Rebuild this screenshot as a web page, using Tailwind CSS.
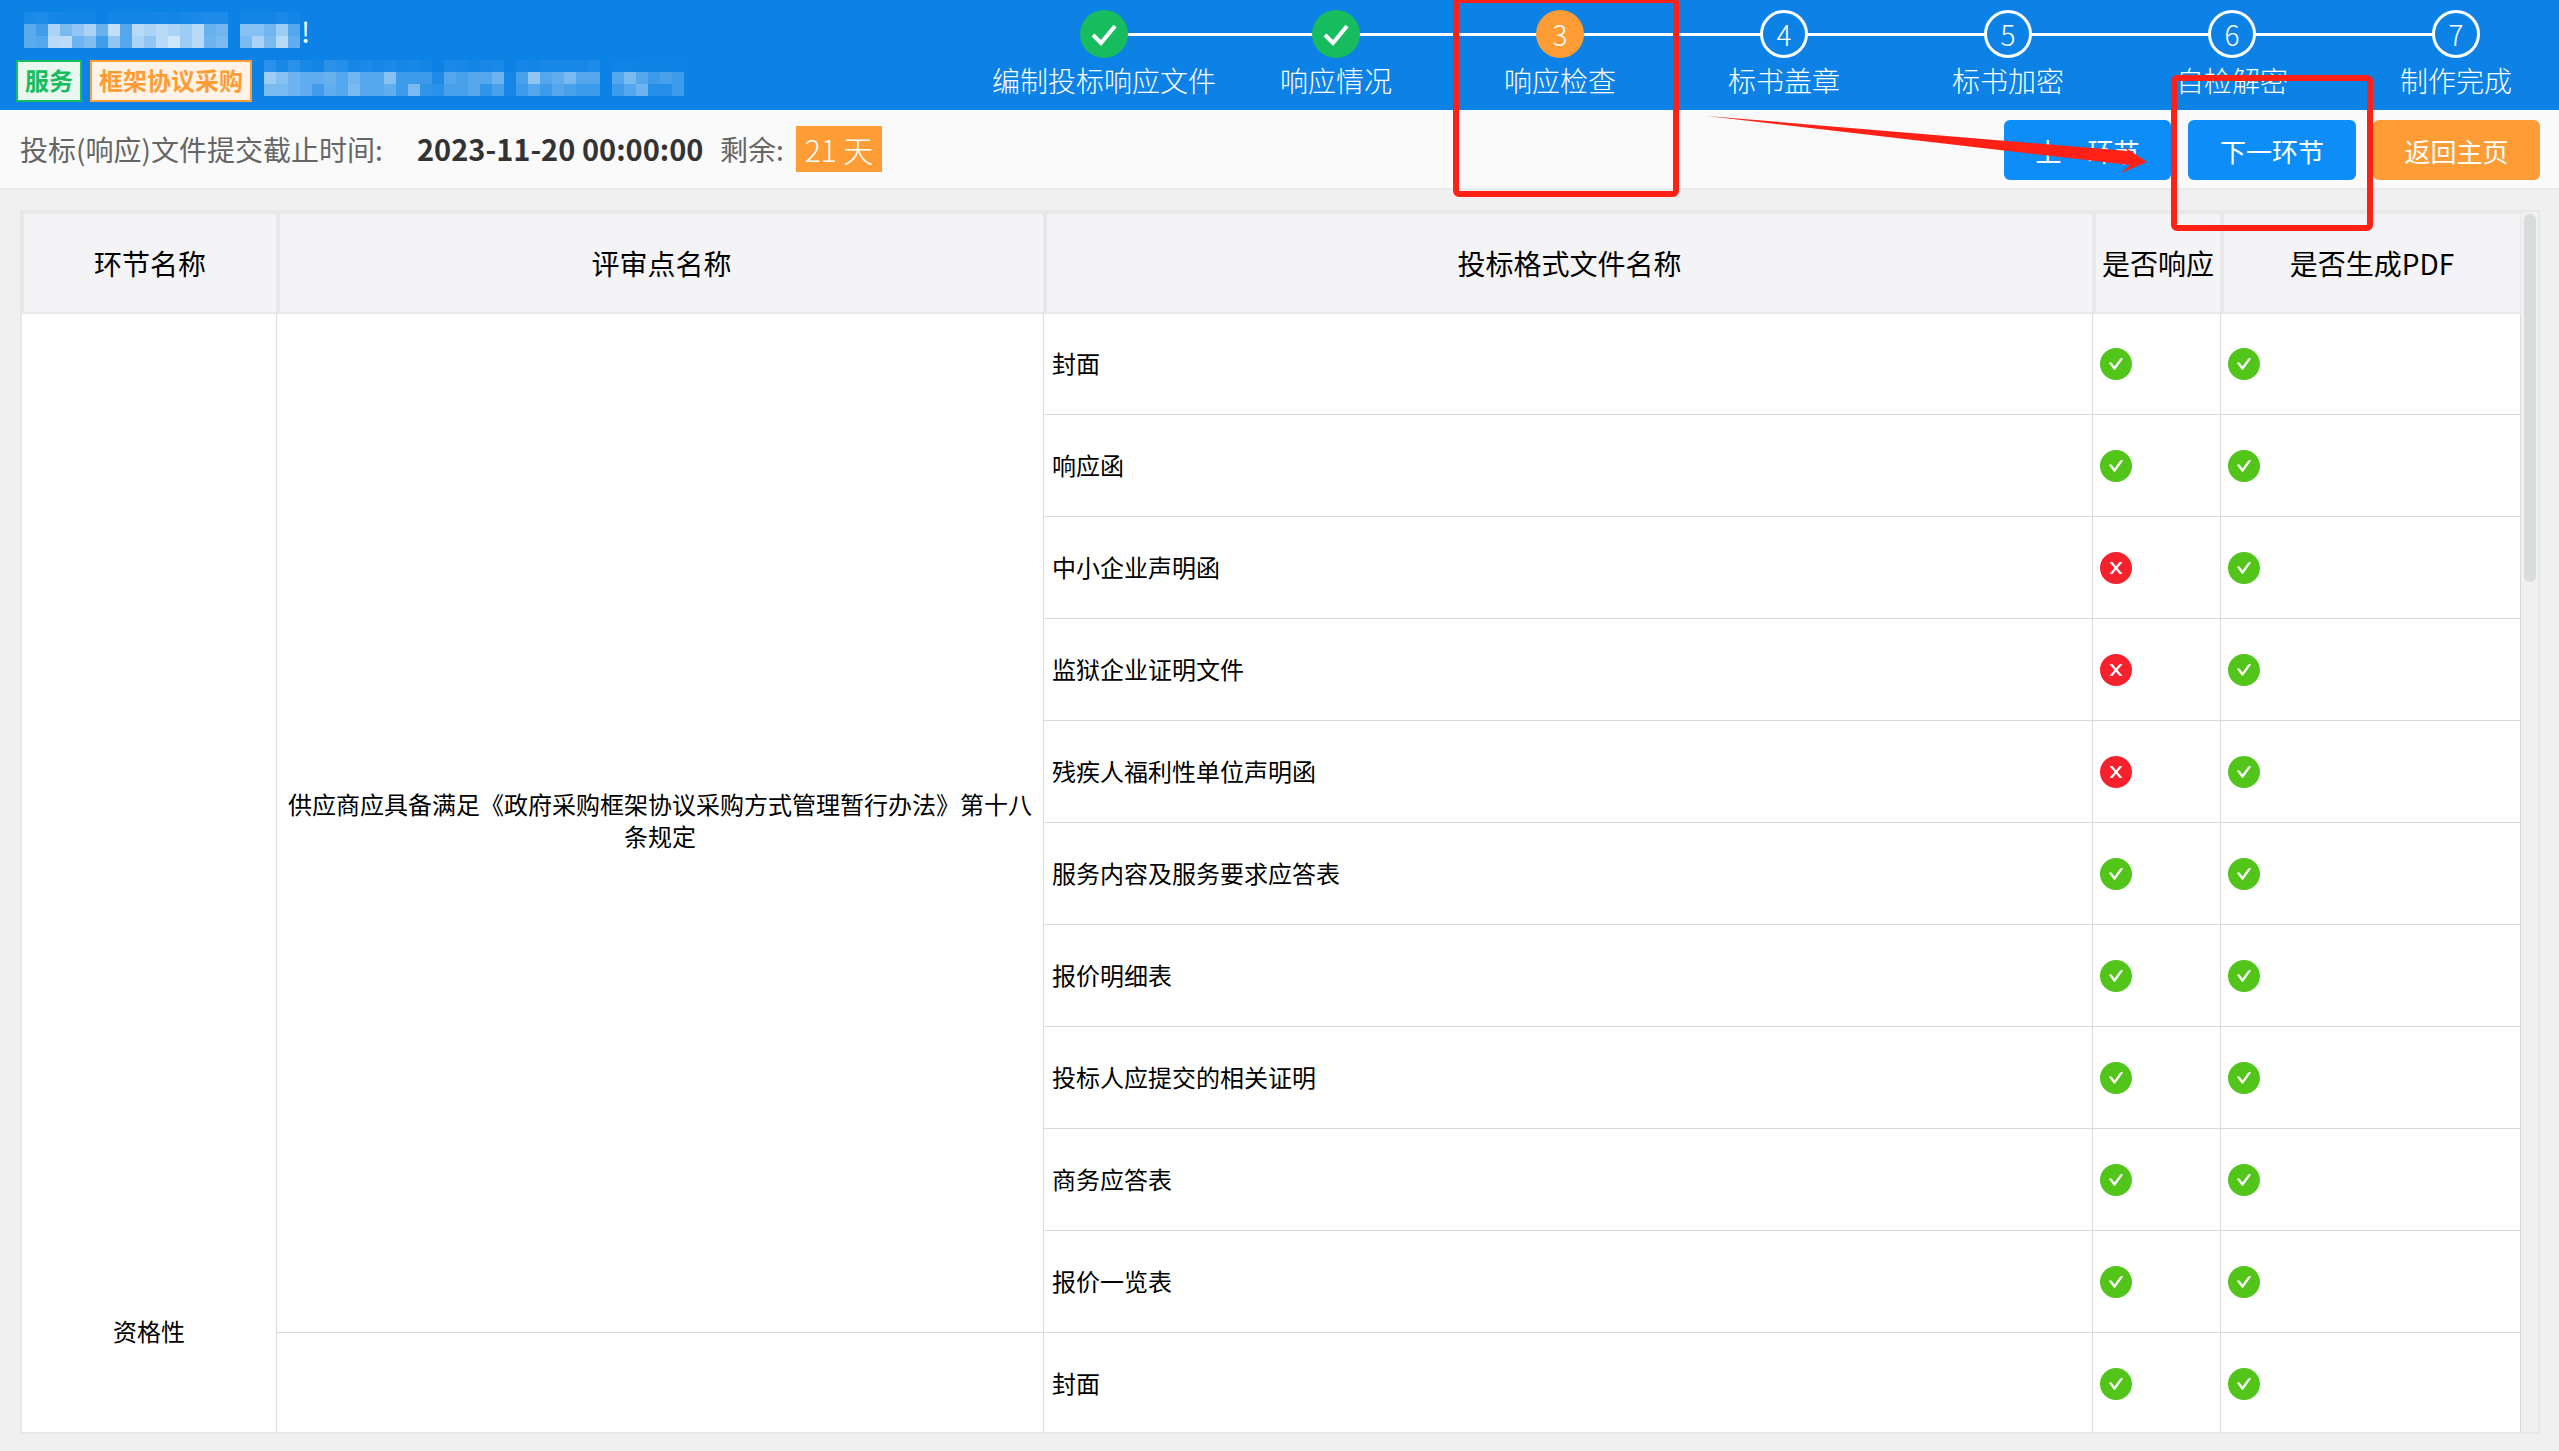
<!DOCTYPE html>
<html lang="zh-CN">
<head>
    <meta charset="UTF-8">
    <title>响应检查</title>
    <script src="https://cdn.jsdelivr.net/npm/@tailwindcss/browser@4"></script>
</head>
<body class="bg-[#f0f0f0] h-screen overflow-hidden relative font-['Noto_Sans_CJK_SC','Liberation_Sans',sans-serif]">
    <svg class="hidden">
        <symbol id="ok" viewBox="64 64 896 896"><path fill="#52c41a" d="M512 64C264.6 64 64 264.6 64 512s200.6 448 448 448 448-200.6 448-448S759.4 64 512 64zm193.5 301.7l-210.6 292a31.8 31.8 0 0 1-51.7 0L318.5 484.9c-3.8-5.3 0-12.7 6.5-12.7h46.9c10.2 0 19.9 4.9 25.9 13.3l71.2 98.8 157.2-218c6-8.3 15.6-13.3 25.9-13.3H699c6.5 0 10.3 7.4 6.5 12.7z"/></symbol>
        <symbol id="no" viewBox="64 64 896 896"><path fill="#f5222d" d="M512 64C264.6 64 64 264.6 64 512s200.6 448 448 448 448-200.6 448-448S759.4 64 512 64zm165.4 618.2l-66-.3L512 563.4l-99.3 118.4-66.1.3c-4.4 0-8-3.5-8-8 0-1.9.7-3.7 1.9-5.2l130.1-155L340.5 359a8.32 8.32 0 0 1-1.9-5.2c0-4.4 3.6-8 8-8l66.1.3L512 464.6l99.3-118.4 66-.3c4.4 0 8 3.5 8 8 0 1.9-.7 3.7-1.9 5.2L553.5 514l130 155c1.2 1.5 1.9 3.3 1.9 5.2 0 4.4-3.6 8-8 8z"/></symbol>
        <symbol id="tick" viewBox="0 0 48 48"><path d="M13 25l8 8 14-17" fill="none" stroke="#fff" stroke-width="4"/></symbol>
    </svg>

    <!-- Header -->
    <header class="h-[110px] bg-[#0c82e6] flex overflow-hidden text-white">
        <div class="w-[984px] shrink-0 pl-4">
            <div class="flex h-[40px] mt-3">
                <svg id="mosaicTop" class="ml-2 w-[277px] h-[40px]"></svg>
                <span class="text-[28px] leading-[38px]">!</span>
            </div>
            <div class="flex mt-2 items-start">
                <span class="h-[42px] w-[66px] border-2 border-[#17bc5e] bg-[#e8f8ef] text-[#17bc5e] text-[24px] leading-[36px] font-bold text-center">服务</span>
                <span class="ml-2 h-[42px] w-[162px] border-2 border-[#fe9c35] bg-[#fff3e8] text-[#fe9c35] text-[24px] leading-[36px] font-bold text-center">框架协议采购</span>
                <svg id="mosaicSub" class="ml-2 w-[424px] h-[42px]"></svg>
            </div>
        </div>
        <div class="relative shrink-0 w-[240px] flex flex-col items-center">
            <div class="absolute left-1/2 top-[33px] h-[3px] w-[232px] bg-white"></div>
            <div class="relative mt-[10px] w-12 h-12 rounded-full bg-[#17bc5e]"><svg class="w-12 h-12"><use href="#tick"/></svg></div>
            <div class="mt-[6px] text-[28px] leading-[32px] font-light">编制投标响应文件</div>
        </div>
        <div class="relative shrink-0 w-[224px] flex flex-col items-center">
            <div class="absolute left-1/2 top-[33px] h-[3px] w-[224px] bg-white"></div>
            <div class="relative mt-[10px] w-12 h-12 rounded-full bg-[#17bc5e]"><svg class="w-12 h-12"><use href="#tick"/></svg></div>
            <div class="mt-[6px] text-[28px] leading-[32px] font-light">响应情况</div>
        </div>
        <div class="relative shrink-0 w-[224px] flex flex-col items-center">
            <div class="absolute left-1/2 top-[33px] h-[3px] w-[224px] bg-white"></div>
            <div class="relative mt-[10px] w-12 h-12 rounded-full bg-[#fe9c35] text-[28px] leading-[48px] text-center font-light">3</div>
            <div class="mt-[6px] text-[28px] leading-[32px] font-light">响应检查</div>
        </div>
        <div class="relative shrink-0 w-[224px] flex flex-col items-center">
            <div class="absolute left-1/2 top-[33px] h-[3px] w-[224px] bg-white"></div>
            <div class="relative mt-[10px] w-12 h-12 rounded-full border-[3px] border-white bg-[#0c82e6] text-[28px] leading-[42px] text-center font-light">4</div>
            <div class="mt-[6px] text-[28px] leading-[32px] font-light">标书盖章</div>
        </div>
        <div class="relative shrink-0 w-[224px] flex flex-col items-center">
            <div class="absolute left-1/2 top-[33px] h-[3px] w-[224px] bg-white"></div>
            <div class="relative mt-[10px] w-12 h-12 rounded-full border-[3px] border-white bg-[#0c82e6] text-[28px] leading-[42px] text-center font-light">5</div>
            <div class="mt-[6px] text-[28px] leading-[32px] font-light">标书加密</div>
        </div>
        <div class="relative shrink-0 w-[224px] flex flex-col items-center">
            <div class="absolute left-1/2 top-[33px] h-[3px] w-[224px] bg-white"></div>
            <div class="relative mt-[10px] w-12 h-12 rounded-full border-[3px] border-white bg-[#0c82e6] text-[28px] leading-[42px] text-center font-light">6</div>
            <div class="mt-[6px] text-[28px] leading-[32px] font-light">自检解密</div>
        </div>
        <div class="relative shrink-0 w-[224px] flex flex-col items-center">
            <div class="relative mt-[10px] w-12 h-12 rounded-full border-[3px] border-white bg-[#0c82e6] text-[28px] leading-[42px] text-center font-light">7</div>
            <div class="mt-[6px] text-[28px] leading-[32px] font-light">制作完成</div>
        </div>
    </header>

    <!-- Deadline bar -->
    <div class="h-[80px] bg-[#fafafa] border-b-2 border-[#e6ebf0] flex items-center pl-5 pr-[19px]">
        <span class="text-[28px] text-[#666] w-[397px]">投标(响应)文件提交截止时间:</span>
        <span class="text-[29px] font-bold text-[#333] w-[303px]">2023-11-20 00:00:00</span>
        <span class="text-[28px] text-[#666] w-[76px]">剩余:</span>
        <span class="w-[86px] h-[46px] bg-[#fe9c35] text-white text-[30px] leading-[46px] text-center font-light">21 天</span>
        <div class="ml-auto flex gap-[17px] mt-[2px] text-white text-[26px]">
            <button class="w-[167px] h-[60px] rounded-md bg-[#0d8df7]">上一环节</button>
            <button class="w-[168px] h-[60px] rounded-md bg-[#0d8df7]">下一环节</button>
            <button class="w-[167px] h-[60px] rounded-md bg-[#fe9c35]">返回主页</button>
        </div>
    </div>

    <!-- Table panel -->
    <div class="mt-5 ml-5 w-[2520px] h-[1224px] border-2 border-[#e8e8e8] bg-[#f0f0f0] flex overflow-hidden">
        <div class="w-[2499px] shrink-0">
            <table class="w-[2499px] table-fixed border-separate border-spacing-0 text-black">
                <colgroup>
                    <col class="w-[255px]"><col class="w-[767px]"><col class="w-[1049px]"><col class="w-[128px]"><col class="w-[300px]">
                </colgroup>
                <thead>
                    <tr class="h-[102px] text-[28px] bg-[#f4f3f6]">
                        <th class="font-normal border-t-2 border-b-2 border-l-2 border-r border-[#e8e7ea]">环节名称</th>
                        <th class="font-normal border-t-2 border-b-2 border-l-[3px] border-r border-[#e8e7ea]">评审点名称</th>
                        <th class="font-normal border-t-2 border-b-2 border-l-[3px] border-r border-[#e8e7ea]">投标格式文件名称</th>
                        <th class="font-normal border-t-2 border-b-2 border-l-[3px] border-r border-[#e8e7ea]">是否响应</th>
                        <th class="font-normal border-t-2 border-b-2 border-l-[3px] border-r border-[#e8e7ea]">是否生成PDF</th>
                    </tr>
                </thead>
                <tbody class="bg-white text-[24px]">
                    <tr class="h-[101px]">
                        <td rowspan="20" class="text-center pb-[6px] border-r border-[#d9d9d9]">资格性</td>
                        <td rowspan="10" class="text-center px-2 pb-[6px] leading-[32px] border-r border-b border-[#d9d9d9]">供应商应具备满足《政府采购框架协议采购方式管理暂行办法》第十八条规定</td>
                        <td class="pl-2 pb-[2px] border-r border-b border-[#d9d9d9]">封面</td>
                        <td class="pl-[7px] border-r border-b border-[#d9d9d9]"><svg class="w-8 h-8 block"><use href="#ok"/></svg></td>
                        <td class="pl-[7px] border-r border-b border-[#d9d9d9]"><svg class="w-8 h-8 block"><use href="#ok"/></svg></td>
                    </tr>
                    <tr class="h-[102px]">
                        <td class="pl-2 pb-[2px] border-r border-b border-[#d9d9d9]">响应函</td>
                        <td class="pl-[7px] border-r border-b border-[#d9d9d9]"><svg class="w-8 h-8 block"><use href="#ok"/></svg></td>
                        <td class="pl-[7px] border-r border-b border-[#d9d9d9]"><svg class="w-8 h-8 block"><use href="#ok"/></svg></td>
                    </tr>
                    <tr class="h-[102px]">
                        <td class="pl-2 pb-[2px] border-r border-b border-[#d9d9d9]">中小企业声明函</td>
                        <td class="pl-[7px] border-r border-b border-[#d9d9d9]"><svg class="w-8 h-8 block"><use href="#no"/></svg></td>
                        <td class="pl-[7px] border-r border-b border-[#d9d9d9]"><svg class="w-8 h-8 block"><use href="#ok"/></svg></td>
                    </tr>
                    <tr class="h-[102px]">
                        <td class="pl-2 pb-[2px] border-r border-b border-[#d9d9d9]">监狱企业证明文件</td>
                        <td class="pl-[7px] border-r border-b border-[#d9d9d9]"><svg class="w-8 h-8 block"><use href="#no"/></svg></td>
                        <td class="pl-[7px] border-r border-b border-[#d9d9d9]"><svg class="w-8 h-8 block"><use href="#ok"/></svg></td>
                    </tr>
                    <tr class="h-[102px]">
                        <td class="pl-2 pb-[2px] border-r border-b border-[#d9d9d9]">残疾人福利性单位声明函</td>
                        <td class="pl-[7px] border-r border-b border-[#d9d9d9]"><svg class="w-8 h-8 block"><use href="#no"/></svg></td>
                        <td class="pl-[7px] border-r border-b border-[#d9d9d9]"><svg class="w-8 h-8 block"><use href="#ok"/></svg></td>
                    </tr>
                    <tr class="h-[102px]">
                        <td class="pl-2 pb-[2px] border-r border-b border-[#d9d9d9]">服务内容及服务要求应答表</td>
                        <td class="pl-[7px] border-r border-b border-[#d9d9d9]"><svg class="w-8 h-8 block"><use href="#ok"/></svg></td>
                        <td class="pl-[7px] border-r border-b border-[#d9d9d9]"><svg class="w-8 h-8 block"><use href="#ok"/></svg></td>
                    </tr>
                    <tr class="h-[102px]">
                        <td class="pl-2 pb-[2px] border-r border-b border-[#d9d9d9]">报价明细表</td>
                        <td class="pl-[7px] border-r border-b border-[#d9d9d9]"><svg class="w-8 h-8 block"><use href="#ok"/></svg></td>
                        <td class="pl-[7px] border-r border-b border-[#d9d9d9]"><svg class="w-8 h-8 block"><use href="#ok"/></svg></td>
                    </tr>
                    <tr class="h-[102px]">
                        <td class="pl-2 pb-[2px] border-r border-b border-[#d9d9d9]">投标人应提交的相关证明</td>
                        <td class="pl-[7px] border-r border-b border-[#d9d9d9]"><svg class="w-8 h-8 block"><use href="#ok"/></svg></td>
                        <td class="pl-[7px] border-r border-b border-[#d9d9d9]"><svg class="w-8 h-8 block"><use href="#ok"/></svg></td>
                    </tr>
                    <tr class="h-[102px]">
                        <td class="pl-2 pb-[2px] border-r border-b border-[#d9d9d9]">商务应答表</td>
                        <td class="pl-[7px] border-r border-b border-[#d9d9d9]"><svg class="w-8 h-8 block"><use href="#ok"/></svg></td>
                        <td class="pl-[7px] border-r border-b border-[#d9d9d9]"><svg class="w-8 h-8 block"><use href="#ok"/></svg></td>
                    </tr>
                    <tr class="h-[102px]">
                        <td class="pl-2 pb-[2px] border-r border-b border-[#d9d9d9]">报价一览表</td>
                        <td class="pl-[7px] border-r border-b border-[#d9d9d9]"><svg class="w-8 h-8 block"><use href="#ok"/></svg></td>
                        <td class="pl-[7px] border-r border-b border-[#d9d9d9]"><svg class="w-8 h-8 block"><use href="#ok"/></svg></td>
                    </tr>
                    <tr class="h-[102px]">
                        <td rowspan="10" class="border-r border-[#d9d9d9]"></td>
                        <td class="pl-2 pb-[2px] border-r border-b border-[#d9d9d9]">封面</td>
                        <td class="pl-[7px] border-r border-b border-[#d9d9d9]"><svg class="w-8 h-8 block"><use href="#ok"/></svg></td>
                        <td class="pl-[7px] border-r border-b border-[#d9d9d9]"><svg class="w-8 h-8 block"><use href="#ok"/></svg></td>
                    </tr>
                    <!-- rows below the fold, only there to hold the rowspans -->
                    <tr class="h-[102px]"></tr><tr class="h-[102px]"></tr><tr class="h-[102px]"></tr>
                    <tr class="h-[102px]"></tr><tr class="h-[102px]"></tr><tr class="h-[102px]"></tr>
                    <tr class="h-[102px]"></tr><tr class="h-[102px]"></tr><tr class="h-[102px]"></tr>
                </tbody>
            </table>
        </div>
        <div class="w-[17px] pl-[3px] pt-[2px]">
            <div class="w-3 h-[368px] rounded-full bg-[#d8dcdc]"></div>
        </div>
    </div>

    <!-- Red review marks drawn on top of the page -->
    <div class="absolute left-[1453px] top-[-3px] w-[226px] h-[200px] border-[6px] border-[#ff2116] rounded-md"></div>
    <div class="absolute left-[2171px] top-[75px] w-[202px] h-[156px] border-[6px] border-[#ff2116] rounded-md"></div>
    <svg class="absolute left-0 top-0 w-[2559px] h-[200px]">
        <polygon fill="#ff2116" points="1707,116 2128,151 2123,146 2147,162 2121,173 2130,165"/>
    </svg>

    <script>
        // pixelated (redacted) text in the header: white blocks of varying strength
        function mosaic(id, x0, y0, rows) {
            let out = '';
            rows.forEach((row, r) => {
                row.forEach((a, c) => {
                    if (a) out += `<rect x="${x0 + c * 12}" y="${y0 + r * 12}" width="12" height="12" fill="#fff" fill-opacity="${a}"/>`;
                });
            });
            document.getElementById(id).innerHTML += out;
        }
        mosaic('mosaicTop', 0, 0, [
            [.06,.08,.04,.03,.03,.03,0,.03,.03,.03,.03,.04,.03,.05,.06,.08,.08,0,.03,.03,.03,.06,.03],
            [.32,.22,.65,.45,.55,.65,.38,.75,.3,.7,.65,.7,.65,.6,.7,.38,.42,0,.5,.5,.42,.6,.3],
            [.32,.3,.7,.72,.4,.48,.22,.55,.3,.65,.55,.7,.8,.6,.7,.4,.45,0,.45,.65,.45,.7,.35]
        ]);
        mosaic('mosaicSub', 4, 0, [
            [.12,.05,.12,.05,.03,.12,.1,.04,.06,.04,.06,.04,.05,.03,0,.06,.05,.03,.05,.06,0,.04,.03,.05,.05,.05,.05,.08,0,.02,.02,.01,.01,.01,.01],
            [.6,.5,.4,.35,.35,.38,.3,.42,.3,.3,.5,.2,.2,.2,.08,.3,.25,.3,.3,.4,.04,.25,.55,.3,.35,.45,.3,.3,0,.3,.45,.3,.2,.25,.2],
            [.45,.45,.4,.35,.22,.35,.3,.45,.3,.3,.35,.2,.45,.15,.12,.25,.25,.3,.15,.25,.04,.2,.3,.2,.3,.25,.2,.2,0,.2,.3,.4,.1,.1,.2]
        ]);
    </script>
</body>
</html>
